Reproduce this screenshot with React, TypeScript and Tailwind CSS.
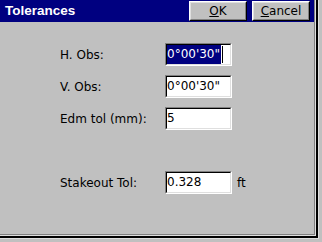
import React from "react";

function Field({ value, selected }: { value: string; selected?: boolean }) {
  return (
    <div className="w-[67px] h-[23px] border border-t-[#808080] border-l-[#808080] border-r-white border-b-white">
      <div className="w-full h-full border border-t-black border-l-black border-r-[#dfdfdf] border-b-[#dfdfdf] bg-white flex items-center">
        {selected ? (
          <div className="flex items-center h-[19px]">
            <span className="bg-[#000080] text-white h-[19px] leading-[19px] pr-[1px]">{value}</span>
            <span className="w-[1px] h-[17px] bg-black ml-[1px]" />
          </div>
        ) : (
          <span className="text-black leading-[19px]">{value}</span>
        )}
      </div>
    </div>
  );
}

function Row({ label, children, className }: { label: string; children: React.ReactNode; className?: string }) {
  return (
    <div className={"flex items-center h-[23px] " + (className || "")}>
      <div className="w-[105px] pl-[60px] box-content whitespace-nowrap text-black">{label}</div>
      {children}
    </div>
  );
}

function Button({ children }: { children: React.ReactNode }) {
  return (
    <div className="w-[58px] h-[20px] border border-t-white border-l-white border-r-black border-b-black">
      <div className="w-full h-full bg-[#c0c0c0] border border-t-[#dfdfdf] border-l-[#dfdfdf] border-r-[#808080] border-b-[#808080] flex items-center justify-center text-black leading-none">
        {children}
      </div>
    </div>
  );
}

export default function App() {
  return (
    <div
      className="w-[322px] h-[242px] bg-[#c0c0c0] overflow-hidden text-[12px]"
      style={{ fontFamily: "'DejaVu Sans', sans-serif" }}
    >
      <div className="w-[319px] h-[239px] border-r border-b border-[#dfdfdf]">
        <div className="w-full h-full border-r-2 border-b-2 border-black">
          <div className="w-full h-full border-r border-b border-[#dfdfdf]">
            <div className="w-full h-full border-r border-b border-[#808080] flex flex-col">
              <div className="h-[22px] bg-[#000080] flex items-center shrink-0">
                <div
                  className="pl-[5px] text-white font-bold text-[13.5px] flex-1"
                  style={{ fontFamily: "'Liberation Sans', sans-serif" }}
                >
                  Tolerances
                </div>
                <div className="flex gap-[5px] pr-[4px] pt-[0px] self-start mt-[1px]">
                  <Button>
                    <span><span className="underline">O</span>K</span>
                  </Button>
                  <Button>
                    <span><span className="underline">C</span>ancel</span>
                  </Button>
                </div>
              </div>
              <div className="flex-1 bg-[#c0c0c0] pt-[21px] flex flex-col">
                <Row label="H. Obs:">
                  <Field value={"0°00'30\""} selected />
                </Row>
                <Row label="V. Obs:" className="mt-[9px]">
                  <Field value={"0°00'30\""} />
                </Row>
                <Row label="Edm tol (mm):" className="mt-[9px]">
                  <Field value="5" />
                </Row>
                <Row label="Stakeout Tol:" className="mt-[41px]">
                  <Field value="0.328" />
                  <span className="ml-[5px] text-black">ft</span>
                </Row>
              </div>
            </div>
          </div>
        </div>
      </div>
    </div>
  );
}
